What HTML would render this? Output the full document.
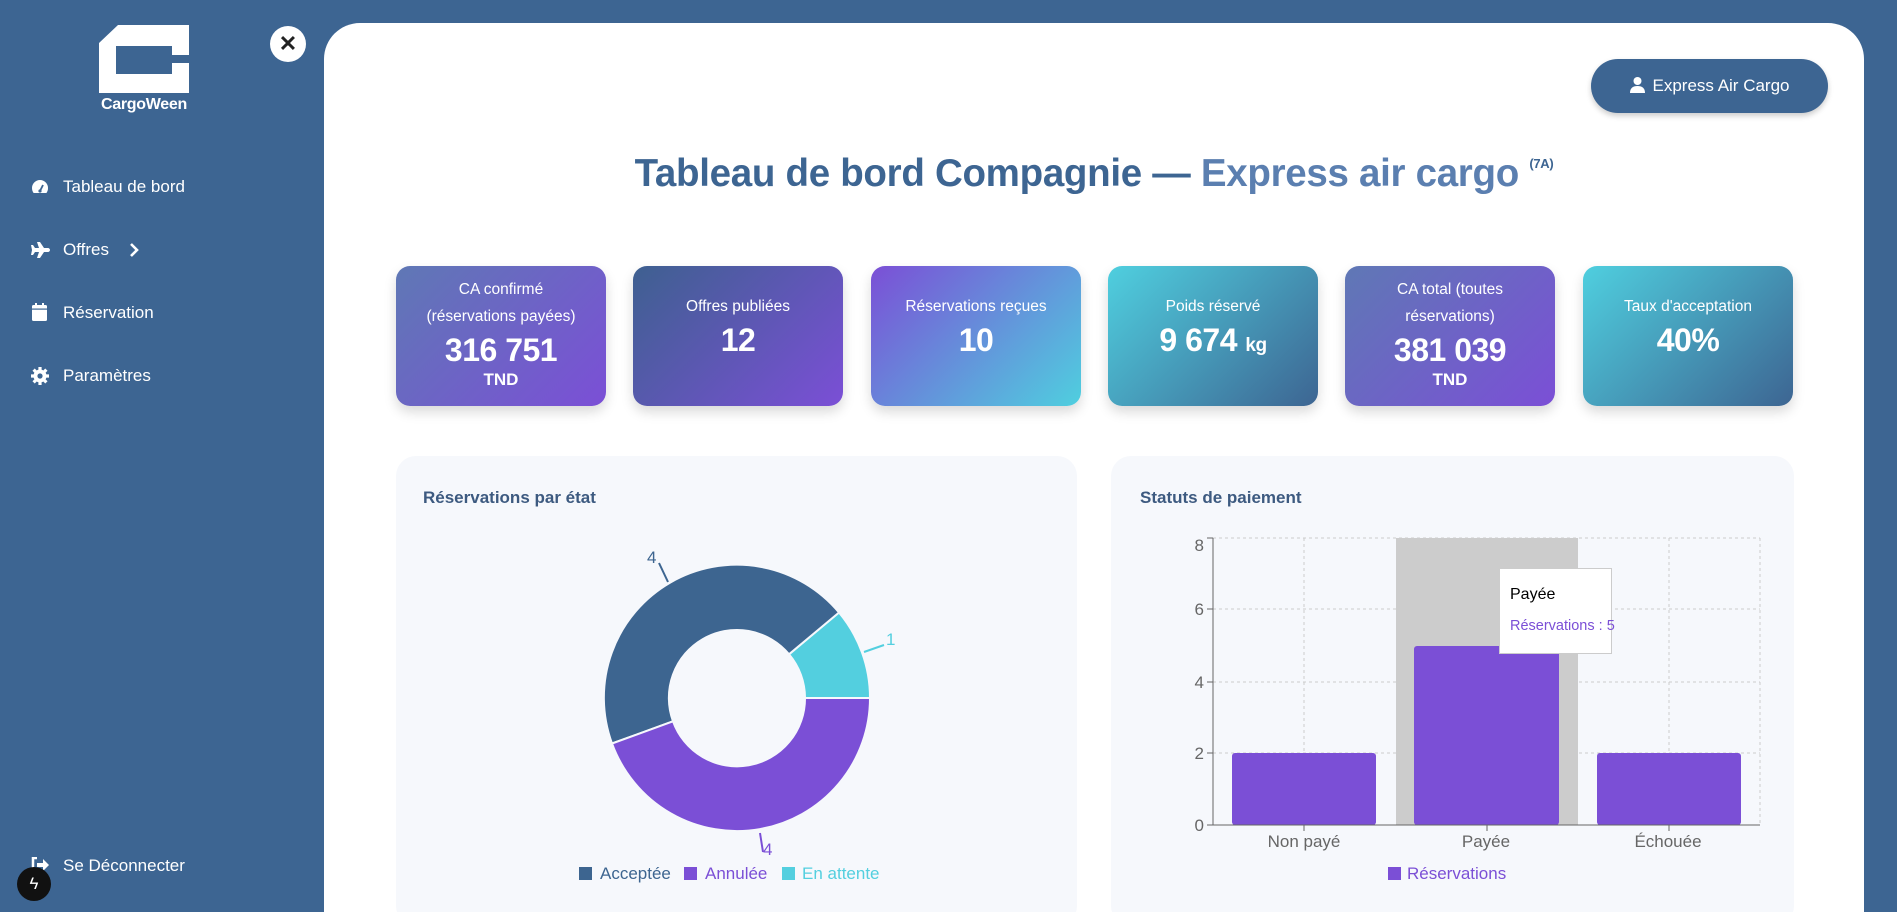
<!DOCTYPE html>
<html style="width:1897px;height:912px;overflow:hidden"><head><meta charset="utf-8"><style>
*{margin:0;padding:0;box-sizing:border-box}
body{width:1897px;height:912px;overflow:hidden;background:#3d6592;font-family:"Liberation Sans",sans-serif;position:relative}
.nav{position:absolute;left:63px;color:#fff;font-size:17px}
.ico{position:absolute;left:31px}
.panel{position:absolute;left:324px;top:23px;width:1540px;height:889px;background:#fff;border-radius:36px 36px 0 0}
.card{position:absolute;top:266px;width:210px;height:140px;border-radius:14px;color:#fff;text-align:center;box-shadow:0 6px 12px rgba(0,0,0,.15)}
.card .l{font-size:15.5px;line-height:27px}
.card .v{font-size:32px;font-weight:bold;line-height:40px;letter-spacing:-0.5px}
.card .u{font-size:17px;font-weight:bold}
.g1{background:linear-gradient(135deg,#5f78b5,#7b4fd6)}
.g2{background:linear-gradient(135deg,#3e6090,#7b4fd6)}
.g3{background:linear-gradient(135deg,#7b4fd6,#4fcfdf)}
.g4{background:linear-gradient(135deg,#4fcfdf,#3d6592)}
.box{position:absolute;top:456px;height:470px;background:#f6f8fc;border-radius:20px}
.bt{position:absolute;top:488px;font-size:17px;font-weight:bold;color:#3d5a80}
</style></head><body>
<svg style="position:absolute;left:0;top:0" width="200" height="100"><path d="M118 25H189V55H172V46H116V74H172V63H189V93H99V43Z" fill="#fff"/></svg>
<div style="position:absolute;left:94px;top:96px;width:100px;text-align:center;color:#fff;font-weight:bold;font-size:16px;letter-spacing:-0.3px">CargoWeen</div>
<div style="position:absolute;left:270px;top:26px;width:36px;height:36px;border-radius:50%;background:#fff;color:#222;font-size:22px;font-weight:bold;text-align:center;line-height:36px">✕</div>
<svg class="ico" style="top:179px" width="18" height="16" viewBox="0 0 18 16"><path d="M9 1A8 8 0 0 0 1 9c0 2 .6 3.6 1.6 5h12.8A8 8 0 0 0 17 9 8 8 0 0 0 9 1z" fill="#fff"/><path d="M9 12l3-6" stroke="#3d6592" stroke-width="1.8"/><circle cx="9" cy="12" r="1.6" fill="#3d6592"/></svg>
<div class="nav" style="top:177px">Tableau de bord</div>
<svg class="ico" style="top:242px" width="19" height="16" viewBox="0 0 19 16"><path d="M0 3h2l2 3h4L6 0h3l4 6h4c1 0 2 1 2 2s-1 2-2 2h-4l-4 6H6l2-6H4l-2 3H0l1-5z" fill="#fff"/></svg>
<div class="nav" style="top:240px">Offres</div>
<svg style="position:absolute;left:129px;top:243px" width="10" height="14" viewBox="0 0 10 14"><path d="M2 1l6 6-6 6" stroke="#fff" stroke-width="2.6" fill="none"/></svg>
<svg class="ico" style="top:303px" width="17" height="18" viewBox="0 0 17 18"><rect x="1" y="2" width="15" height="16" rx="1.5" fill="#fff"/><rect x="1" y="5.5" width="15" height="1.2" fill="#3d6592"/><rect x="4" y="0" width="2" height="4" fill="#fff"/><rect x="11" y="0" width="2" height="4" fill="#fff"/></svg>
<div class="nav" style="top:303px">Réservation</div>
<svg class="ico" style="top:367px" width="18" height="18" viewBox="0 0 18 18"><g fill="#fff"><circle cx="9" cy="9" r="6.5"/><g stroke="#fff" stroke-width="3.2"><path d="M9 0v18M0 9h18M2.6 2.6l12.8 12.8M15.4 2.6L2.6 15.4"/></g></g><circle cx="9" cy="9" r="2.6" fill="#3d6592"/></svg>
<div class="nav" style="top:366px">Paramètres</div>
<svg class="ico" style="top:857px" width="18" height="16" viewBox="0 0 18 16"><path d="M6 1H2v14h4" stroke="#fff" stroke-width="2.5" fill="none"/><path d="M6 6h6V2l6 6-6 6v-4H6z" fill="#fff"/></svg>
<div class="nav" style="top:856px">Se Déconnecter</div>
<div style="position:absolute;left:17px;top:867px;width:34px;height:34px;border-radius:50%;background:#111;color:#fff;text-align:center;line-height:34px;font-size:17px">ϟ</div>

<div class="panel"></div>
<div style="position:absolute;left:1591px;top:59px;width:237px;height:54px;border-radius:27px;background:#3d6592;color:#fff;font-size:17px;line-height:54px;text-align:center;box-shadow:0 3px 6px rgba(0,0,0,.2)"><svg width="15" height="16" viewBox="0 0 15 16" style="vertical-align:-2px;margin-right:8px"><circle cx="7.5" cy="4" r="4" fill="#fff"/><path d="M0 16c0-5 3-7 7.5-7S15 11 15 16z" fill="#fff"/></svg>Express Air Cargo</div>
<div style="position:absolute;left:324px;width:1540px;top:152px;text-align:center;font-size:38.5px;font-weight:bold;color:#3d6592;letter-spacing:-0.3px">Tableau de bord Compagnie — <span style="color:#5b7fb0">Express air cargo</span> <sup style="font-size:13px;vertical-align:18px">(7A)</sup></div>

<div class="card g1" style="left:396px;padding-top:10px"><div class="l">CA confirmé<br>(réservations payées)</div><div class="v">316 751</div><div class="u">TND</div></div>
<div class="card g2" style="left:633px;padding-top:27px"><div class="l">Offres publiées</div><div class="v">12</div></div>
<div class="card g3" style="left:871px;padding-top:27px"><div class="l">Réservations reçues</div><div class="v">10</div></div>
<div class="card g4" style="left:1108px;padding-top:27px"><div class="l">Poids réservé</div><div class="v">9 674 <span style="font-size:19px">kg</span></div></div>
<div class="card g1" style="left:1345px;padding-top:10px"><div class="l">CA total (toutes<br>réservations)</div><div class="v">381 039</div><div class="u">TND</div></div>
<div class="card g4" style="left:1583px;padding-top:27px"><div class="l">Taux d'acceptation</div><div class="v">40%</div></div>

<div class="box" style="left:396px;width:681px"></div>
<div class="box" style="left:1111px;width:683px"></div>
<div class="bt" style="left:423px">Réservations par état</div>
<div class="bt" style="left:1140px">Statuts de paiement</div>

<svg style="position:absolute;left:0;top:0" width="1897" height="912">
<g stroke="#f6f8fc" stroke-width="2">
<path d="M870,698 A133 133 0 0 0 839,612.5 L789,654.3 A68 68 0 0 1 805,698 Z" fill="#53cfdf"/>
<path d="M839,612.5 A133 133 0 0 0 612,743.5 L673,721.3 A68 68 0 0 1 789,654.3 Z" fill="#3d6590"/>
<path d="M612,743.5 A133 133 0 0 0 870,698 L805,698 A68 68 0 0 1 673,721.3 Z" fill="#7b4fd6"/>
</g>
<path d="M668,582L659,563" stroke="#3d6590" stroke-width="2"/>
<path d="M864,652L884,645" stroke="#53cfdf" stroke-width="2"/>
<path d="M760,833L763,852" stroke="#7b4fd6" stroke-width="2"/>
<g font-family="Liberation Sans" font-size="17">
<text x="647" y="563" fill="#3d6590">4</text>
<text x="886" y="645" fill="#53cfdf">1</text>
<text x="763" y="855" fill="#7b4fd6">4</text>
<rect x="579" y="867" width="13" height="13" fill="#3d6590"/><text x="600" y="879" fill="#3d6590">Acceptée</text>
<rect x="684" y="867" width="13" height="13" fill="#7b4fd6"/><text x="705" y="879" fill="#7b4fd6">Annulée</text>
<rect x="782" y="867" width="13" height="13" fill="#53cfdf"/><text x="802" y="879" fill="#53cfdf">En attente</text>
</g>
<rect x="1396" y="538" width="182" height="287" fill="#ccc"/>
<g stroke="#ccc" stroke-dasharray="3 3"><path d="M1213 538H1760M1213 609H1760M1213 682H1760M1213 753H1760M1304 538V825M1487 538V825M1669 538V825M1760 538V825"/></g>
<rect x="1232" y="753" width="144" height="72" rx="3" fill="#7b4fd6"/>
<rect x="1414" y="646" width="145" height="179" rx="3" fill="#7b4fd6"/>
<rect x="1597" y="753" width="144" height="72" rx="3" fill="#7b4fd6"/>
<path d="M1213 538V825H1760M1207 538H1213M1207 609H1213M1207 682H1213M1207 753H1213M1207 825H1213M1304 825v6M1487 825v6M1669 825v6" stroke="#666" fill="none"/>
<g font-family="Liberation Sans" font-size="17" fill="#666" text-anchor="end">
<text x="1204" y="551">8</text><text x="1204" y="615">6</text><text x="1204" y="688">4</text><text x="1204" y="759">2</text><text x="1204" y="831">0</text></g>
<g font-family="Liberation Sans" font-size="17" fill="#666" text-anchor="middle">
<text x="1304" y="847">Non payé</text><text x="1486" y="847">Payée</text><text x="1668" y="847">Échouée</text></g>
<rect x="1388" y="867" width="13" height="13" fill="#7b4fd6"/>
<text x="1407" y="879" font-family="Liberation Sans" font-size="17" fill="#7b4fd6">Réservations</text>
<rect x="1499.5" y="568.5" width="112" height="85" fill="#fff" stroke="#ccc"/>
<text x="1510" y="599" font-family="Liberation Sans" font-size="16" fill="#000">Payée</text>
<text x="1510" y="630" font-family="Liberation Sans" font-size="14.5" fill="#7b4fd6">Réservations : 5</text>
</svg>
</body></html>
